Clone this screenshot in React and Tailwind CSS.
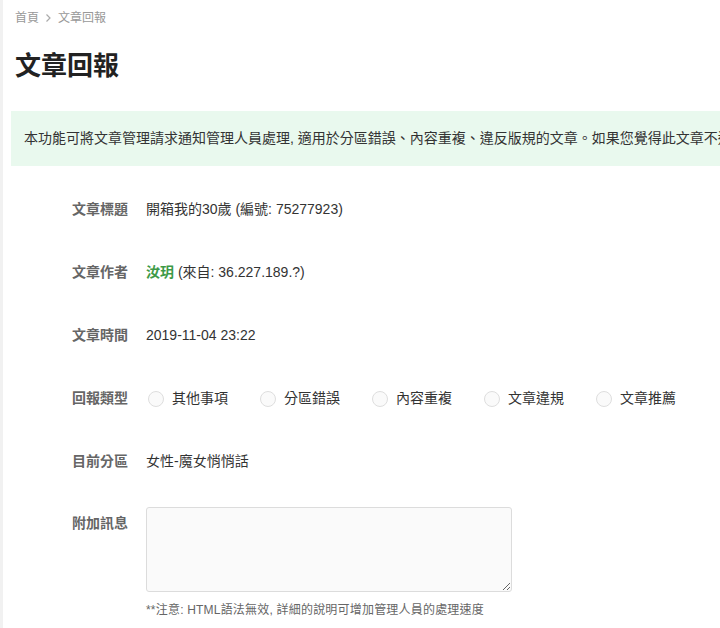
import React from 'react';

const font = { fontFamily: '"Liberation Sans", "Noto Sans CJK TC", sans-serif' };

const types = ['其他事項', '分區錯誤', '內容重複', '文章違規', '文章推薦'];

function Row({ label, children }) {
    return (
        <div className="flex items-center h-[63px]">
            <div className="w-[131px] pr-[18px] text-right text-[14px] font-semibold text-[#666] shrink-0">
                {label}
            </div>
            <div className="text-[14px] text-[#333]">{children}</div>
        </div>
    );
}

export default function App() {
    return (
        <div style={font} className="w-screen h-screen overflow-hidden bg-white flex">
            {/* left edge strip */}
            <div className="w-[3px] bg-[#f1f1f1] shrink-0"></div>

            <div className="flex-1 min-w-0 pl-[12px]">
                {/* breadcrumb */}
                <div className="h-[36px] flex items-center text-[12px] text-[#999]">
                    <span>首頁</span>
                    <svg className="mx-[6px]" width="7" height="10" viewBox="0 0 7 10" fill="none">
                        <path d="M1.5 1.5 L5 5 L1.5 8.5" stroke="#aaa" strokeWidth="1.2" />
                    </svg>
                    <span>文章回報</span>
                </div>

                {/* title */}
                <h1 className="h-[60px] flex items-center text-[26px] font-bold text-[#222]">文章回報</h1>

                {/* notice */}
                <div className="mt-[15px] -ml-[4px] h-[55px] flex items-center pl-[13px] bg-[#e9f9ee] text-[14px] text-[#333] whitespace-nowrap overflow-hidden">
                    本功能可將文章管理請求通知管理人員處理, 適用於分區錯誤、內容重複、違反版規的文章。如果您覺得此文章不適合目前的分區, 請選擇適當的回報類型。
                </div>

                <div className="mt-[12px]">
                    <Row label="文章標題">開箱我的30歲 (編號: 75277923)</Row>
                    <Row label="文章作者">
                        <span className="text-[#3d9a47] font-semibold">汝玥</span> (來自: 36.227.189.?)
                    </Row>
                    <Row label="文章時間">2019-11-04 23:22</Row>
                    <Row label="回報類型">
                        <div className="flex items-center gap-[30px]">
                            {types.map((t) => (
                                <label key={t} className="flex items-center gap-[8px] cursor-pointer">
                                    <span className="ml-[2px] w-[16px] h-[16px] rounded-full border border-[#dedede] bg-[#fafafa]"></span>
                                    <span>{t}</span>
                                </label>
                            ))}
                        </div>
                    </Row>
                    <Row label="目前分區">女性-魔女悄悄話</Row>

                    {/* message */}
                    <div className="flex items-start pt-[14px]">
                        <div className="w-[131px] pr-[18px] pt-[6px] text-right text-[14px] font-semibold text-[#666] shrink-0">
                            附加訊息
                        </div>
                        <div>
                            <textarea className="block w-[366px] h-[85px] border border-[#dcdcdc] rounded-[3px] bg-[#fafafa] outline-none"></textarea>
                            <p className="mt-[9px] text-[12px] tracking-[0.2px] text-[#666]">**注意: HTML語法無效, 詳細的說明可增加管理人員的處理速度</p>
                        </div>
                    </div>
                </div>
            </div>
        </div>
    );
}
